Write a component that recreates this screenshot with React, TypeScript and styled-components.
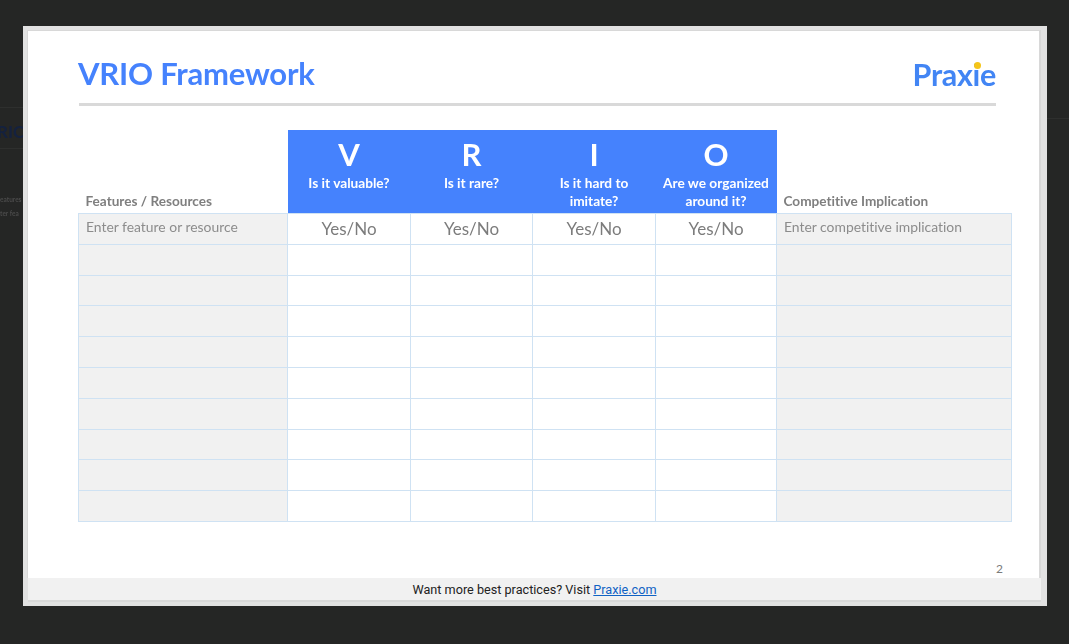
import React from 'react';
import styled, { createGlobalStyle } from 'styled-components';

const GlobalStyle = createGlobalStyle`
  html, body {
    margin: 0;
    padding: 0;
    height: 100%;
    background: #252625;
    overflow: hidden;
  }
`;

const Backdrop = styled.div`
  position: relative;
  width: 1069px;
  height: 644px;
  padding: 26px 22px 38px 23px;
  box-sizing: border-box;
  background: #252625;
  overflow: hidden;
`;

// what is left of the page behind the dialog
const GhostPage = styled.div`
  position: absolute;
  inset: 0;
  display: flex;
  justify-content: space-between;
`;

const GhostLeft = styled.div`
  width: 30px;
  padding-top: 107px;
`;

const GhostRight = styled.div`
  width: 30px;
  padding-top: 118px;
`;

const GhostBar = styled.div`
  height: 11px;
  border-top: 1px solid #2e2f2e;
`;

const GhostTitle = styled.div`
  height: 29px;
  margin-bottom: 44px;
  border-bottom: 1px solid #2e2f2e;
  text-indent: -3px;
  font: 700 17px/26px "Lato", sans-serif;
  color: #14213f;
  filter: blur(0.3px);
`;

const GhostText = styled.div`
  height: 14px;
  font: 700 6.5px/14px "Lato", sans-serif;
  color: #4a4a4a;
  filter: blur(0.3px);
`;

const Frame = styled.div`
  position: relative;
  height: 100%;
  box-sizing: border-box;
  padding: 4px 6px 4px 4px;
  background: #e2e2e2;
  display: flex;
  flex-direction: column;
`;

const Slide = styled.div`
  flex: 1;
  background: #fff;
  border: solid #d8d8d8;
  border-width: 1px 2px 0 1px;
  padding: 25px 28px 2px 50px;
  display: flex;
  flex-direction: column;
  font-family: "Lato", "Open Sans", sans-serif;
  font-variant-ligatures: none;
`;

const SlideHeader = styled.div`
  display: flex;
  justify-content: space-between;
  align-items: flex-start;
  height: 46px;
  margin: 0 15px 0 1px;
  border-bottom: 3px solid #d9d9d9;
  padding-bottom: 1px;
  filter: blur(0.3px);
`;

const Title = styled.h1`
  margin: 0 0 0 -1px;
  font-size: 31px;
  line-height: 34px;
  font-weight: 700;
  color: #4582fd;
  letter-spacing: -0.2px;
`;

const Logo = styled.div`
  position: relative;
  font: 700 30.5px/36px "Lato", sans-serif;
  color: #4285f4;
  letter-spacing: -0.3px;
`;

const LogoDot = styled.span`
  position: absolute;
  right: 15px;
  top: 6px;
  width: 7px;
  height: 7px;
  border-radius: 50%;
  background: #f5c518;
`;

const Table = styled.table`
  margin-top: 24px;
  border-collapse: collapse;
  table-layout: fixed;
  width: 933px;
  filter: blur(0.3px);
`;

const LabelHead = styled.th`
  padding: 0 0 4px 7px;
  vertical-align: bottom;
  text-align: left;
  font-size: 13.6px;
  font-weight: 700;
  color: #7f7f7f;
`;

const BlueHead = styled.th`
  height: 83px;
  padding: 0;
  background: #4582fd;
  color: #fff;
  text-align: center;
  vertical-align: top;
  font-weight: 700;
`;

const Letter = styled.div`
  margin-top: 7px;
  height: 31px;
  font-size: 31px;
  line-height: 35px;
`;

const Question = styled.div`
  margin-top: 6px;
  font-size: 13.7px;
  line-height: 17.5px;
`;

const Cell = styled.td<{ $shaded?: boolean }>`
  height: 30.8px;
  padding: 0 0 5px 7px;
  box-sizing: border-box;
  border: 1px solid #cfe2f3;
  background: ${(p) => (p.$shaded ? '#f1f1f1' : '#fff')};
  color: #8c8c8c;
  font-size: 13.9px;
`;

const AnswerCell = styled(Cell)`
  padding: 0;
  text-align: center;
  font-size: 17px;
  color: #7c7c7c;
`;

const PageNumber = styled.div`
  margin: auto 8px 0 0;
  align-self: flex-end;
  font-size: 12px;
  color: #7b7b7b;
`;

const Footer = styled.div`
  height: 22px;
  flex-shrink: 0;
  margin-left: 1px;
  border-bottom: 2px solid #d9d9d9;
  background: #f1f1f1;
  text-align: center;
  font: 12.65px/23px "Roboto", sans-serif;
  color: #222;
  a {
    color: #0f62c4;
  }
`;

const columns = [
  { letter: 'V', question: <>Is it valuable?</> },
  { letter: 'R', question: <>Is it rare?</> },
  { letter: 'I', question: <>Is it hard to<br />imitate?</> },
  { letter: 'O', question: <>Are we organized<br />around it?</> },
];

const rows = Array.from({ length: 10 }, (_, i) => i);

const App: React.FC = () => (
  <Backdrop>
    <GlobalStyle />
    <GhostPage>
      <GhostLeft>
        <GhostBar />
        <GhostTitle>RIC</GhostTitle>
        <GhostText>eatures</GhostText>
        <GhostText>ter fea</GhostText>
      </GhostLeft>
      <GhostRight>
        <GhostBar />
      </GhostRight>
    </GhostPage>
    <Frame>
      <Slide>
        <SlideHeader>
          <Title>VRIO Framework</Title>
          <Logo>
            Praxie
            <LogoDot />
          </Logo>
        </SlideHeader>
        <Table>
          <colgroup>
            <col style={{ width: 209 }} />
            <col style={{ width: 123 }} />
            <col style={{ width: 122 }} />
            <col style={{ width: 123 }} />
            <col style={{ width: 121 }} />
            <col style={{ width: 235 }} />
          </colgroup>
          <thead>
            <tr>
              <LabelHead>Features / Resources</LabelHead>
              {columns.map((c) => (
                <BlueHead key={c.letter}>
                  <Letter>{c.letter}</Letter>
                  <Question>{c.question}</Question>
                </BlueHead>
              ))}
              <LabelHead>Competitive Implication</LabelHead>
            </tr>
          </thead>
          <tbody>
            {rows.map((r) => (
              <tr key={r}>
                <Cell $shaded>{r === 0 && 'Enter feature or resource'}</Cell>
                {columns.map((c) => (
                  <AnswerCell key={c.letter}>{r === 0 && 'Yes/No'}</AnswerCell>
                ))}
                <Cell $shaded>{r === 0 && 'Enter competitive implication'}</Cell>
              </tr>
            ))}
          </tbody>
        </Table>
        <PageNumber>2</PageNumber>
      </Slide>
      <Footer>
        Want more best practices? Visit <a href="#">Praxie.com</a>
      </Footer>
    </Frame>
  </Backdrop>
);

export default App;
